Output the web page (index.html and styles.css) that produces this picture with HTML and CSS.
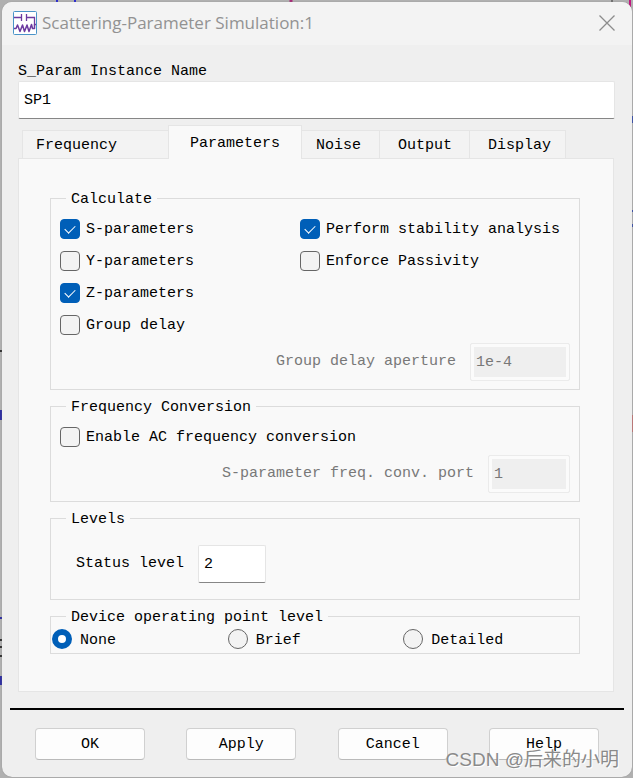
FILE: index.html
```html
<!DOCTYPE html>
<html lang="en">
<head>
<meta charset="utf-8">
<title>Scattering-Parameter Simulation:1</title>
<link rel="stylesheet" href="styles.css">
</head>
<body>
<div class="canvas" aria-hidden="true">
  <svg class="edge edge-top" height="24"><path d="M57 0v2M75 0v2" stroke="#2b2bd0" stroke-width="2"/><path d="M291 0v2" stroke="#a82c78" stroke-width="3"/><path d="M612 0v2" stroke="#333" stroke-width="1"/><path d="M630 0v7" stroke="#c01880" stroke-width="2"/></svg>
  <svg class="edge edge-left" width="2" height="700"><path d="M0 351h2M0 640h2M0 647h2M0 656h2" stroke="#333" stroke-width="2"/><path d="M0 410h2v10h-2zM0 617h2v2h-2zM0 676h2v9h-2z" fill="#3030a0"/></svg>
  <svg class="edge edge-right" width="1" height="500"><path d="M0 116h1v7h-1zM0 210h1v2h-1zM0 224h1v3h-1z" fill="#3a4fa8"/><path d="M0 415h1v17h-1z" fill="#c07878"/></svg>
</div>
<form class="dialog">
  <header class="titlebar">
    <svg class="app-icon" width="24" height="24" viewBox="0 0 24 24" fill="none">
      <rect x=".5" y=".5" width="23" height="23" rx="1" fill="#fff" stroke="#4a94c8"/>
      <path d="M1 6.500H8M8.500 3v7M13.500 3v7M14 6.500H21.500V13.500H23" stroke="#6c3aa0" stroke-width="1.300"/>
      <path d="M1 17.500H3L4.500 14L7 20.500L9.500 14L11.500 20.500L14 14L16 20.500L18.500 13.500L19.500 17.500H21.500V13.500" stroke="#6c3aa0" stroke-width="1.500" stroke-linejoin="round"/>
    </svg>
    <h1 class="title">Scattering-Parameter Simulation:1</h1>
    <button class="close" type="button" aria-label="Close"><svg width="16" height="16" viewBox="0 0 16 16"><path d="M.5.5l15 15M15.500.5l-15 15" stroke="#8c8c8c" stroke-width="1.300"/></svg></button>
  </header>
  <main class="content">
    <label class="name-label" for="instance">S_Param Instance Name</label>
    <input class="field" id="instance" type="text" value="SP1">
    <div class="tabs" role="tablist">
      <button class="tab tab-first" type="button" role="tab">Frequency</button>
      <button class="tab active" type="button" role="tab" aria-selected="true">Parameters</button>
      <button class="tab tab-noise" type="button" role="tab">Noise</button>
      <button class="tab tab-output" type="button" role="tab">Output</button>
      <button class="tab" type="button" role="tab">Display</button>
    </div>
    <section class="panel" role="tabpanel">
      <fieldset class="group">
        <legend>Calculate</legend>
        <div class="checks">
          <label class="option"><input type="checkbox" checked>S-parameters</label>
          <label class="option"><input type="checkbox" checked>Perform stability analysis</label>
          <label class="option"><input type="checkbox">Y-parameters</label>
          <label class="option"><input type="checkbox">Enforce Passivity</label>
          <label class="option"><input type="checkbox" checked>Z-parameters</label>
          <label class="option option-row"><input type="checkbox">Group delay</label>
        </div>
        <div class="entry entry-end">
          <label for="aperture">Group delay aperture</label>
          <input class="field" id="aperture" type="text" value="1e-4" disabled>
        </div>
      </fieldset>
      <fieldset class="group">
        <legend>Frequency Conversion</legend>
        <div class="checks">
          <label class="option option-row"><input type="checkbox">Enable AC frequency conversion</label>
        </div>
        <div class="entry entry-end">
          <label for="port">S-parameter freq. conv. port</label>
          <input class="field field-port" id="port" type="text" value="1" disabled>
        </div>
      </fieldset>
      <fieldset class="group group-levels">
        <legend>Levels</legend>
        <div class="entry">
          <label for="status">Status level</label>
          <input class="field field-status" id="status" type="text" value="2">
        </div>
      </fieldset>
      <fieldset class="group group-radios">
        <legend>Device operating point level</legend>
        <div class="radios">
          <label class="option"><input type="radio" name="level" checked>None</label>
          <label class="option"><input type="radio" name="level">Brief</label>
          <label class="option"><input type="radio" name="level">Detailed</label>
        </div>
      </fieldset>
    </section>
  </main>
  <footer class="actions">
    <button class="action" type="button">OK</button>
    <button class="action" type="button">Apply</button>
    <button class="action" type="button">Cancel</button>
    <button class="action" type="button">Help</button>
  </footer>
</form>
<div class="watermark">CSDN @后来的小明</div>
</body>
</html>
```
FILE: styles.css
```css
* { box-sizing: border-box; }

body {
  margin: 0;
  padding: 2px 1px 1px 2px;
  min-height: 100vh;
  display: flex;
  position: relative;
  background: #b0b0b0;
  color: #000;
  font: 15px/20px "Liberation Mono", monospace;
}

input, button {
  font: inherit;
  color: inherit;
  margin: 0;
}

.edge { position: absolute; top: 0; left: 0; }
.edge-top { width: 100%; }
.edge-right { left: auto; right: 0; }

.dialog {
  position: relative;
  flex: 1;
  display: flex;
  flex-direction: column;
  background: #efefef;
  border-radius: 10px;
  overflow: hidden;
  box-shadow: 0 0 1px #777;
}

.titlebar {
  display: flex;
  align-items: center;
  gap: 5px;
  height: 43px;
  padding: 0 17px 2px 11px;
  background: #f3f3f3;
}

.title {
  flex: 1;
  margin: 0;
  color: #929292;
  font: 17px/24px "Open Sans", "Noto Sans", sans-serif;
}

.close {
  display: flex;
  padding: 0;
  border: 0;
  background: none;
}

.content { padding: 16px 17px 0 16px; }

.name-label {
  display: block;
  padding-top: 1px;
  line-height: 19px;
}

.field {
  display: block;
  width: 100%;
  height: 38px;
  padding: 1px 5px 0;
  background: #fff;
  border: 1px solid #e5e5e5;
  border-bottom-color: #868686;
  border-radius: 2px;
}

.field:disabled {
  width: 100px;
  color: #787878;
  background: #efefef;
  border: 1px solid #ebebeb;
  box-shadow: inset 0 0 0 3px #fbfbfb;
}

.tabs {
  display: flex;
  align-items: flex-end;
  margin-top: 6px;
  padding-left: 4px;
}

.tab {
  height: 28px;
  padding: 2px 14px 0 18px;
  background: #f3f3f3;
  border: 1px solid #e5e5e5;
  border-width: 1px 1px 0 0;
}

.tab-first {
  padding: 2px 51px 0 13px;
  border-width: 1px 0 0 1px;
}

.tab.active {
  position: relative;
  height: 34px;
  margin-bottom: -1px;
  padding: 2px 21px 0 21px;
  background: #f9f9f9;
  border-width: 1px 1px 0;
}

.tab-noise { padding: 2px 18px 0 14px; }
.tab-output { padding-right: 17px; }

.panel {
  display: flex;
  flex-direction: column;
  gap: 4px;
  margin-right: 1px;
  padding: 27px 33px 37px 31px;
  background: #f9f9f9;
  border: 1px solid #e5e5e5;
}

.group {
  min-width: 0;
  margin: 0;
  padding: 5px 0 8px;
  border: 1px solid #dcdcdc;
}

.group legend {
  margin-left: 15px;
  padding: 4px 5px 0;
}

.checks {
  display: grid;
  grid-template-columns: 240px 1fr;
  row-gap: 4px;
  padding: 0 9px;
}

.option {
  display: flex;
  align-items: flex-start;
  gap: 6px;
  height: 28px;
  line-height: 30px;
}

.option-row { grid-column: 1 / -1; }

.option input {
  appearance: none;
  flex: none;
  width: 20px;
  height: 20px;
  margin-top: 4px;
  background: #f3f3f3;
  border: 1px solid #666;
  border-radius: 4px;
}

.option input:checked {
  background: #005fb8;
  border-color: #005fb8;
}

.option input[type="checkbox"]:checked::before {
  content: "";
  display: block;
  width: 9px;
  height: 5px;
  margin: 5px 4px;
  border: solid #fff;
  border-width: 0 0 1px 1px;
  transform: rotate(-45deg);
}

.option input[type="radio"] { border-radius: 50%; }

.option input[type="radio"]:checked {
  background: #fff;
  border: 6px solid #005fb8;
}

.entry {
  display: flex;
  align-items: center;
  gap: 14px;
}

.entry-end {
  justify-content: flex-end;
  margin-top: 4px;
  padding: 0 9px;
  color: #787878;
}

.field:disabled.field-port { width: 82px; }
.field-status { width: 68px; }

.group-levels { padding: 15px 25px 16px; }
.group-levels legend { margin-left: -10px; }
.group-radios { padding: 0; }

.radios {
  display: grid;
  grid-template-columns: repeat(3, 1fr);
  padding-left: 1px;
}

.radios .option {
  gap: 8px;
  height: 25px;
  line-height: 26px;
}

.radios .option input { margin-top: 1px; }

.actions {
  display: flex;
  justify-content: space-between;
  margin: 16px 8px 0;
  padding: 18px 25px 17px;
  border-top: 2px solid #000;
}

.action {
  width: 110px;
  height: 32px;
  padding: 2px 0 0;
  background: #fdfdfd;
  border: 1px solid #d0d0d0;
  border-bottom-color: #bababa;
  border-radius: 4px;
}

.watermark {
  position: absolute;
  right: 14px;
  bottom: 6px;
  color: #8a8a8a;
  font: 19px/24px "Liberation Sans", "Noto Sans CJK SC", sans-serif;
  text-shadow: 1px 1px 0 #fff;
}
```
